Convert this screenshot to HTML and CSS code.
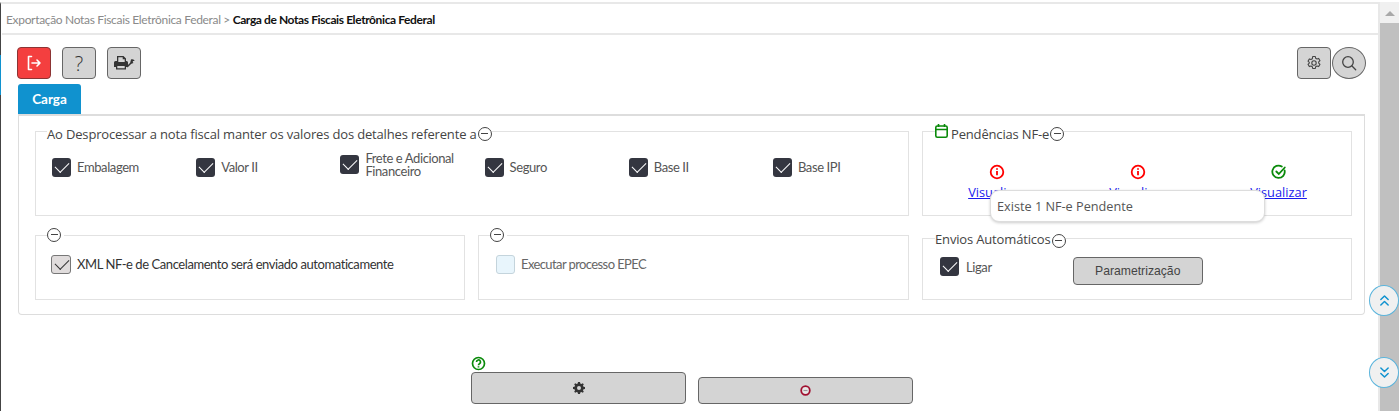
FILE: index.html
```html
<!DOCTYPE html>
<html lang="pt-BR">
<head>
<meta charset="utf-8">
<title>Carga de Notas Fiscais Eletrônica Federal</title>
<link rel="stylesheet" href="styles.css">
</head>
<body>
<div class="app">
  <main class="main">
    <nav class="crumbs"><span class="crumb">Exportação Notas Fiscais Eletrônica Federal</span><span class="sep">&gt;</span><strong class="crumb-current">Carga de Notas Fiscais Eletrônica Federal</strong></nav>
    <div class="toolbar">
      <button class="tool tool-red" aria-label="Sair"><svg width="18" height="18" viewBox="0 0 18 18" fill="none" stroke="#fff" stroke-width="1.6" stroke-linecap="round" stroke-linejoin="round"><path d="M6.5 2.5H3.5v13h3"/><path d="M7 9h8M12 6l3 3-3 3"/></svg></button>
      <button class="tool tool-q" aria-label="Ajuda">?</button>
      <button class="tool" aria-label="Impressora"><svg width="21" height="14" viewBox="0 0 21 14"><path fill="#333" fill-rule="evenodd" d="M3 0h6.500L12 2.500V5h.5A1.500 1.500 0 0 1 14 6.500V11h-2v2.500H2V11H0V6.500A1.500 1.500 0 0 1 1.500 5H3zM4.300 1.300V6h6.400V3.300H8.700v-2zM3.300 10v2.200h7.400V10z"/><path d="M13.500 10.500l4.500-4.500" stroke="#333" stroke-width="1.500" stroke-linecap="round"/><path d="M17 3.500c1.500-.8 3.500 0 3.500 1.500l-1.500 0-.5 1 1 1c-1.200.8-2.800.5-3.200-.8z" fill="#333"/></svg></button>
      <div class="spacer"></div>
      <button class="tool" aria-label="Configurar"><svg width="16" height="16" viewBox="0 0 16 16" fill="none" stroke="#444" stroke-width="1.100" stroke-linejoin="round"><path d="M6.700 1.500h2.600l.4 1.800 1.300.7 1.700-.6 1.300 2.300-1.300 1.200v1.200l1.300 1.200-1.300 2.300-1.700-.6-1.300.7-.4 1.800H6.700l-.4-1.800-1.300-.7-1.700.6-1.300-2.300 1.300-1.200V7.400L2 6.200l1.300-2.300 1.700.6 1.300-.7z"/><circle cx="8" cy="8" r="2.200"/></svg></button>
      <button class="tool tool-round" aria-label="Pesquisar"><svg width="16" height="16" viewBox="0 0 16 16" fill="none" stroke="#444" stroke-width="1.300" stroke-linecap="round"><circle cx="7" cy="7" r="5.300"/><path d="M11 11l3.700 3.700"/></svg></button>
    </div>
    <div class="tabs"><button class="tab">Carga</button></div>
    <section class="panel">
      <fieldset class="box box-wide">
        <legend class="legend">Ao Desprocessar a nota fiscal manter os valores dos detalhes referente a<span class="minus"></span></legend>
        <div class="checks">
          <label class="check"><span class="cb on"></span>Embalagem</label>
          <label class="check"><span class="cb on"></span>Valor II</label>
          <label class="check check-up"><span class="cb on"></span><span>Frete e Adicional Financeiro</span></label>
          <label class="check"><span class="cb on"></span>Seguro</label>
          <label class="check"><span class="cb on"></span>Base II</label>
          <label class="check"><span class="cb on"></span>Base IPI</label>
        </div>
      </fieldset>
      <fieldset class="box">
        <legend class="legend legend-pend"><svg class="cal" width="13" height="14" viewBox="0 0 13 14" fill="none" stroke="#0a8a0a" stroke-width="1.600"><rect x=".8" y="2" width="11.400" height="11.200" rx="1.500"/><path d="M.8 5.500h11.400M3.500 0v3M9.500 0v3"/></svg>Pendências NF-e<span class="minus"></span></legend>
        <div class="pend">
          <div class="pend-item"><svg width="16" height="16" viewBox="0 0 16 16" fill="none" stroke="#f00" stroke-width="1.800"><circle cx="8" cy="8" r="6.300"/><path d="M8 7v4.300M8 4.200v1.500"/></svg><a href="#">Visualizar</a></div>
          <div class="pend-item"><svg width="16" height="16" viewBox="0 0 16 16" fill="none" stroke="#f00" stroke-width="1.800"><circle cx="8" cy="8" r="6.300"/><path d="M8 7v4.300M8 4.200v1.500"/></svg><a href="#">Visualizar</a></div>
          <div class="pend-item"><svg width="16" height="16" viewBox="0 0 16 16" fill="none" stroke="#0a8a0a" stroke-width="1.800" stroke-linecap="round"><path d="M13.600 6.500A6.200 6.200 0 1 1 10.800 2.500"/><path d="M5.300 7.500l2.500 2.500 6-6.500"/></svg><a href="#">Visualizar</a></div>
        </div>
        <div class="tooltip">Existe 1 NF-e Pendente</div>
      </fieldset>
      <fieldset class="box">
        <legend class="legend legend-empty"><span class="minus"></span></legend>
        <label class="check check-xml"><span class="cb soft"></span>XML NF-e de Cancelamento será enviado automaticamente</label>
      </fieldset>
      <fieldset class="box">
        <legend class="legend legend-empty"><span class="minus"></span></legend>
        <label class="check check-xml check-off"><span class="cb off"></span>Executar processo EPEC</label>
      </fieldset>
      <fieldset class="box">
        <legend class="legend legend-auto">Envios Automáticos<span class="minus"></span></legend>
        <div class="auto">
          <label class="check check-ligar"><span class="cb on"></span>Ligar</label>
          <button class="param">Parametrização</button>
        </div>
      </fieldset>
    </section>
    <div class="actions">
      <div class="action-main">
        <svg class="help" width="15" height="15" viewBox="0 0 15 15" fill="none" stroke="#0a8a0a" stroke-width="1.700"><circle cx="7.500" cy="7.500" r="6"/><path d="M5.500 6a2 2 0 1 1 3 1.700c-.7.400-1 .8-1 1.500M7.500 10.300v1.200"/></svg>
        <button class="act" aria-label="Processar"><svg width="12" height="12" viewBox="0 0 12 12"><path fill="#333" fill-rule="evenodd" d="M5 0h2l.3 1.500 1.100.5L9.700 1.200l1.100 1.100L10 3.600l.5 1.100L12 5v2l-1.500.3-.5 1.100.8 1.300-1.100 1.100L8.400 10l-1.100.5L7 12H5l-.3-1.500L3.600 10l-1.300.8-1.100-1.100L2 8.400l-.5-1.100L0 7V5l1.500-.3L2 3.600l-.8-1.300 1.100-1.100L3.600 2l1.100-.5zM6 4a2 2 0 1 0 0 4 2 2 0 0 0 0-4z"/></svg></button>
      </div>
      <button class="act act-2" aria-label="Cancelar"><svg width="11" height="11" viewBox="0 0 11 11" fill="none"><circle cx="5.500" cy="5.500" r="4.300" fill="#e8e8e8" stroke="#a01030" stroke-width="1.800"/><path d="M3.500 5.500h4" stroke="#999" stroke-width="1.200"/></svg></button>
    </div>
  </main>
  <aside class="scrollbar">
    <div class="scroll-up"></div>
    <div class="thumb"></div>
  </aside>
</div>
<button class="float float-up" aria-label="Subir"><svg width="11" height="13" viewBox="0 0 12 14" fill="none" stroke="#1092cf" stroke-width="1.600" stroke-linecap="round" stroke-linejoin="round"><path d="M2 6l4-4 4 4M2 12l4-4 4 4"/></svg></button>
<button class="float float-down" aria-label="Descer"><svg width="11" height="13" viewBox="0 0 12 14" fill="none" stroke="#1092cf" stroke-width="1.600" stroke-linecap="round" stroke-linejoin="round"><path d="M2 2l4 4 4-4M2 8l4 4 4-4"/></svg></button>
</body>
</html>
```
FILE: styles.css
```css
* { box-sizing: border-box; }
html, body { margin: 0; height: 411px; overflow: hidden; background: #fff; }
body { font-family: "Open Sans", sans-serif; color: #444; position: relative; }
button { font-family: inherit; padding: 0; cursor: pointer; }
.app { display: flex; height: 411px; padding-top: 2px; }
.main { width: 1380px; position: relative; border-left: 1px solid #444; padding-left: 1px; border-top: 2px solid #e8e8e8; border-right: 2px solid #e8e8e8; }
.main::before { content: ""; position: absolute; left: -1px; top: 51px; width: 1px; height: 40px; background: #1092cf; }
.crumbs { height: 31px; border-bottom: 2px solid #e8e8e8; padding: 7px 0 0 4px; font: 12px/18px Lato, sans-serif; letter-spacing: -.33px; color: #8a8a8a; display: flex; }
.sep { margin: 0 2px 0 2px; width: 8px; text-align: center; }
.crumb-current { color: #111; letter-spacing: -.4px; }
.toolbar { display: flex; gap: 11px; padding: 12px 12px 0 15px; height: 49px; }
.spacer { flex: 1; }
.tool { width: 34px; height: 32px; background: #d4d4d4; border: 1px solid #666; border-radius: 4px; display: flex; align-items: center; justify-content: center; color: #444; }
.tool-red { background: #f43f3f; border-color: #8b3434; }
.tool-q { font-size: 20px; font-weight: 300; color: #333; }
.tool-round { border-radius: 50%; margin-left: -10px; }
.tabs { padding-left: 16px; height: 30px; }
.tab { width: 63px; height: 30px; border: 0; border-radius: 3px 3px 0 0; background: #1092cf; color: #fff; font: 700 13.500px Lato, "Open Sans", sans-serif; }
.panel { margin-left: 16px; width: 1347px; height: 201px; border: 1px solid #ddd; border-top-width: 2px; border-radius: 0 0 4px 4px; padding: 5px 12px 0 16px; display: grid; grid-template-columns: 430px 431px 430px; column-gap: 13px; grid-template-rows: 95px 72px; row-gap: 12px; }
.box { margin: 0; min-width: 0; border: 1px solid #e2e2e2; padding: 0; position: relative; }
.box-wide { grid-column: span 2; }
.legend { font-size: 13px; letter-spacing: -.16px; line-height: 14px; height: 20px; padding: 6px 0 0; margin-left: 11px; display: flex; align-items: flex-start; white-space: nowrap; color: #444; }
.legend-pend { margin-left: 12px; }
.legend-auto { padding-top: 4px; margin-left: 12px; }
.legend-auto .minus { margin-top: 2px; }
.legend-empty { height: 14px; padding: 0 3px 0 0; }
.cal { margin: -3px 3px 0 0; }
.minus { margin-left: 1px; width: 14px; height: 14px; border: 1.300px solid #444; border-radius: 50%; display: inline-block; position: relative; }
.legend-empty .minus { margin-left: 0; }
.minus::after { content: ""; position: absolute; left: 2.500px; right: 2.500px; top: 5px; height: 1.300px; background: #444; }
.checks { display: grid; grid-template-columns: repeat(6, 144.200px); padding: 17px 0 0 16px; align-items: start; }
.check { display: flex; align-items: center; gap: 6px; font: 13px/12.500px Lato, sans-serif; letter-spacing: -.4px; color: #555; }
.check-up { margin-top: -6px; }
.check-up span:last-child { width: 110px; }
.cb { flex: none; width: 19px; height: 19px; border-radius: 3px; position: relative; }
.cb.on { background: #343640; }
.cb.soft { width: 20px; background: #e0dcdc; border: 1px solid #777; }
.cb.off { background: #e8f5fc; border: 1px solid #c4d4dc; }
.cb.on::after, .cb.soft::after { content: ""; position: absolute; left: 6px; top: 1px; width: 7px; height: 12px; border: solid #fff; border-width: 0 1.200px 1.200px 0; transform: rotate(45deg); }
.cb.soft::after { border-color: #333; left: 5.500px; top: 0; }
.check-xml { padding: 13px 0 0 15px; gap: 6px; color: #333; letter-spacing: -.43px; }
.check-off { padding-left: 17px; color: #666; gap: 6px; letter-spacing: -.6px; }
.pend { display: grid; grid-template-columns: repeat(3, 141px); padding: 23px 0 0 3px; }
.pend-item { display: flex; flex-direction: column; align-items: center; font-size: 12.800px; line-height: 18px; gap: 3px; }
.pend-item a { color: #1a1aee; }
.tooltip { position: absolute; left: 67px; top: 49px; width: 275px; height: 32px; padding: 0 6px; background: #fff; border: 1px solid #ddd; border-radius: 9px; box-shadow: 0 1px 3px rgba(0,0,0,.2); font-size: 12.700px; line-height: 31px; color: #555; }
.auto { display: flex; padding: 9px 0 0 17px; gap: 81px; align-items: flex-start; }
.check-ligar { gap: 7px; padding-top: 1px; }
.cb { margin-top: 0; }
.check-ligar .cb { margin-top: -1px; }
.param { margin-top: 0; width: 130px; height: 28px; background: #d4d4d4; border: 1px solid #666; border-radius: 4px; font: 12.200px "Liberation Sans", sans-serif; letter-spacing: 0; color: #444; }
.actions { display: flex; gap: 12px; padding-left: 469px; align-items: flex-end; height: 89px; }
.help { display: block; margin-bottom: 1px; }
.act { width: 215px; height: 32px; background: #d4d4d4; border: 1px solid #666; border-radius: 4px; display: flex; align-items: center; justify-content: center; }
.act-2 { height: 27px; }
.scrollbar { width: 19px; background: #f0f0f0; position: relative; padding-top: 21px; }
.scroll-up { position: absolute; left: 5px; top: 9px; border: 5px solid transparent; border-top: 0; border-bottom: 5px solid #a8a8a8; }
.thumb { height: 100%; background: #c0c0c0; }
.float { position: absolute; left: 1369px; width: 30px; height: 31px; border-radius: 50%; background: #f0f0f0; border: 1.500px solid #5ab4dc; display: flex; align-items: center; justify-content: center; }
.float-up { top: 285px; }
.float-down { top: 357px; }
```
